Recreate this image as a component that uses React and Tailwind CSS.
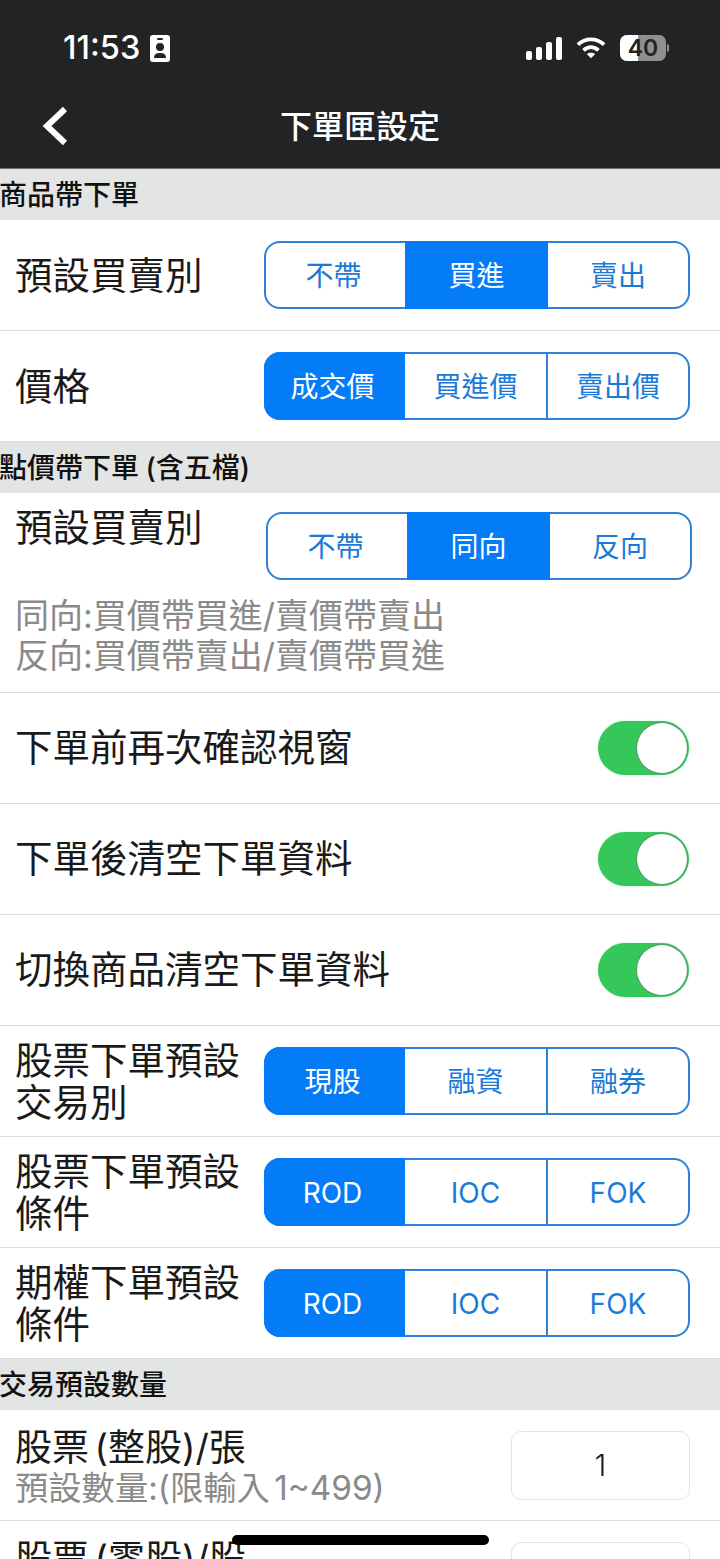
const font = { fontFamily: '"Inter", "Noto Sans CJK TC", sans-serif' };

function SectionBar({ title }) {
  return (
    <div className="h-[51px] bg-[#e3e5e4] flex items-center -indent-px text-[28px] leading-none font-medium text-[#111] shrink-0 [word-spacing:-1px]">
      {title}
    </div>
  );
}

function Segment({ options, active }) {
  return (
    <div className="w-[426px] h-[68px] flex rounded-[16px] border-2 border-[#2f80d8] shrink-0">
      <div
        className={`flex items-center justify-center pr-[4px] pt-px text-[28px] leading-none rounded-l-[15px] ${
          active === 0 ? "w-[141px] -ml-[2px] -my-[2px] rounded-l-[16px] bg-[#057cf7] text-white" : "w-[139px] text-[#1b7ad8]"
        }`}
      >
        {options[0]}
      </div>
      <div
        className={`w-[143px] flex items-center justify-center pt-px text-[28px] leading-none ${
          active === 1 ? "-my-[2px] bg-[#057cf7] text-white" : "border-r-2 border-[#2f80d8] text-[#1b7ad8]"
        }`}
      >
        {options[1]}
      </div>
      <div className="flex-1 flex items-center justify-center pt-px text-[28px] leading-none text-[#1b7ad8]">
        {options[2]}
      </div>
    </div>
  );
}

function Row({ children, className = "" }) {
  return (
    <div className={`h-[111px] border-b border-[#dcdcdc] flex items-center justify-between pl-[15px] pr-[30px] shrink-0 ${className}`}>
      {children}
    </div>
  );
}

function SegmentRow({ label, options, active }) {
  return (
    <Row>
      <div className="text-[37.5px] leading-[42px] pt-[2px] text-[#1a1a1a] w-[240px]">{label}</div>
      <Segment options={options} active={active} />
    </Row>
  );
}

function Toggle() {
  return (
    <div className="w-[91px] h-[54px] mr-px rounded-full bg-[#35c759] flex items-center justify-end pr-[2px] shadow-[0_0_2px_#a6f0b8]">
      <div className="w-[50px] h-[50px] rounded-full bg-white shadow-[0_0_0_1px_#4e9d68]" />
    </div>
  );
}

function ToggleRow({ label }) {
  return (
    <Row>
      <div className="text-[37.5px] leading-none text-[#1a1a1a]">{label}</div>
      <Toggle />
    </Row>
  );
}

function QuantityRow({ label, hint, value }) {
  return (
    <Row className="items-start pt-[17px]">
      <div className="[word-spacing:-5px]">
        <div className="text-[37px] leading-[41px] text-[#1a1a1a]">{label}</div>
        <div className="text-[33.3px] leading-[41px] text-[#8a8a8a]">{hint}</div>
      </div>
      <div className="w-[179px] h-[69px] mt-[4px] rounded-[10px] border border-[#e4e4e4] flex items-center justify-center text-[30px] font-light text-[#1a1a1a]">
        {value}
      </div>
    </Row>
  );
}

function StatusBar() {
  return (
    <div className="h-[96px] flex items-start justify-between pl-[63px] pr-[51px] pt-[30px]">
      <div className="flex items-center gap-[10px] text-white">
        <span className="text-[32.5px] leading-[36px] font-medium">11:53</span>
        <svg width="20" height="27" viewBox="0 0 20 27">
          <rect width="20" height="27" rx="3" fill="#fff" />
          <circle cx="10" cy="12" r="4" fill="#222325" />
          <path d="M4 23c0-4 2.500-5 6-5s6 1 6 5z" fill="#222325" />
          <rect x="7" y="3" width="6" height="2" rx="1" fill="#222325" />
        </svg>
      </div>
      <div className="flex items-center h-[36px]">
        <svg width="36" height="23" viewBox="0 0 36 23" fill="#fff">
          <rect x="0" y="14" width="6" height="9" rx="2" />
          <rect x="10" y="10" width="6" height="13" rx="2" />
          <rect x="20" y="5" width="6" height="18" rx="2" />
          <rect x="30" y="0" width="6" height="23" rx="2" />
        </svg>
        <svg className="ml-[14px]" width="30" height="24" viewBox="0 0 32 24" fill="none" stroke="#fff" strokeWidth="4">
          <path d="M2 8.5c8-7.500 20-7.500 28 0" />
          <path d="M8 14.500c5-4.500 11-4.500 16 0" />
          <path d="M16 23l-4.500-4.500c2.500-2 6.500-2 9 0z" fill="#fff" stroke="none" />
        </svg>
        <div className="flex items-center ml-[14px]">
          <div className="relative w-[46px] h-[26px] rounded-[7px] bg-[#8f8f8f] flex items-center justify-center">
            <div className="absolute left-0 top-0 bottom-0 w-[18px] rounded-l-[7px] bg-white" />
            <span className="relative text-[23px] leading-none font-semibold text-[#222325]">40</span>
          </div>
          <div className="w-[2px] h-[8px] ml-[1px] rounded-r bg-[#8f8f8f]" />
        </div>
      </div>
    </div>
  );
}

export default function App() {
  return (
    <div className="w-[720px] h-[1559px] relative overflow-hidden bg-white flex flex-col" style={font}>
      <div className="h-[169px] bg-[#222325] border-b border-[#6b6b6b] shrink-0">
        <StatusBar />
        <div className="relative h-[62px] flex items-center justify-center">
          <svg className="absolute left-[42px] top-[10px]" width="26" height="40" viewBox="0 0 26 40" fill="none" stroke="#fff" strokeWidth="6">
            <path d="M23 3 5 20l18 17" />
          </svg>
          <span className="text-[32px] leading-none font-medium text-white">下單匣設定</span>
        </div>
      </div>

      <SectionBar title="商品帶下單" />
      <SegmentRow label="預設買賣別" options={["不帶", "買進", "賣出"]} active={1} />
      <SegmentRow label="價格" options={["成交價", "買進價", "賣出價"]} active={0} />

      <SectionBar title="點價帶下單 (含五檔)" />
      <div className="h-[200px] border-b border-[#dcdcdc] shrink-0 pl-[15px] pr-7 pt-[19px]">
        <div className="flex justify-between items-start">
          <div className="text-[37.5px] leading-none -mt-[3px] text-[#1a1a1a]">預設買賣別</div>
          <Segment options={["不帶", "同向", "反向"]} active={1} />
        </div>
        <div className="mt-[16px] text-[34px] leading-[40px] text-[#8a8a8a]">
          <div>同向:買價帶買進/賣價帶賣出</div>
          <div>反向:買價帶賣出/賣價帶買進</div>
        </div>
      </div>

      <ToggleRow label="下單前再次確認視窗" />
      <ToggleRow label="下單後清空下單資料" />
      <ToggleRow label="切換商品清空下單資料" />
      <SegmentRow label="股票下單預設交易別" options={["現股", "融資", "融券"]} active={0} />
      <SegmentRow label="股票下單預設條件" options={["ROD", "IOC", "FOK"]} active={0} />
      <SegmentRow label="期權下單預設條件" options={["ROD", "IOC", "FOK"]} active={0} />

      <SectionBar title="交易預設數量" />
      <QuantityRow label="股票 (整股)/張" hint="預設數量:(限輸入 1~499)" value="1" />
      <QuantityRow label="股票 (零股)/股" hint="預設數量:(限輸入 1~999)" value="" />

      <div className="absolute left-[232px] top-[1535px] w-[257px] h-[10px] rounded-full bg-black" />
    </div>
  );
}
